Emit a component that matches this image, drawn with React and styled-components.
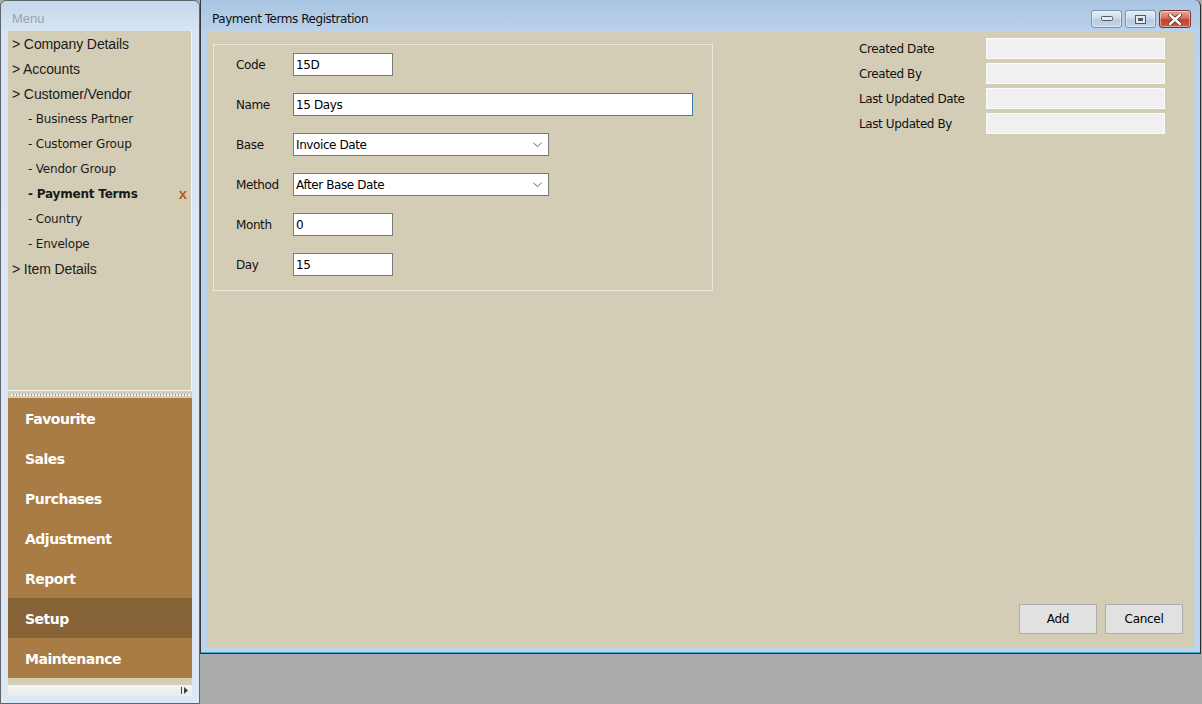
import React from "react";
import styled, { createGlobalStyle } from "styled-components";

const Global = createGlobalStyle`
  html, body { margin: 0; padding: 0; }
  body { width: 1202px; height: 704px; overflow: hidden; font-family: "Liberation Sans", Arial, sans-serif; }
  * { box-sizing: border-box; }
`;

const Screen = styled.div`
  display: flex;
  width: 1202px;
  height: 704px;
  background: #ababab;
`;

const MenuPanel = styled.aside`
  width: 200px;
  height: 704px;
  flex: none;
  display: flex;
  flex-direction: column;
  border: 1px solid #5f6468;
  border-radius: 6px 6px 0 0;
  background: linear-gradient(180deg, #c4d7ec 0px, #d8e6f3 30px, #dce8f4 100%);
  padding: 0 7px 7px 7px;
`;

const MenuTitle = styled.div`
  height: 30px;
  display: flex;
  align-items: center;
  padding: 4px 0 0 4px;
  color: #9aa4ae;
  font-size: 13px;
`;

const Tree = styled.div`
  height: 359px;
  background: #d4cdb6;
  border-right: 1px solid #f4f4f4;
  display: flex;
  flex-direction: column;
`;

const TreeRow = styled.div`
  height: 25px;
  flex: none;
  display: flex;
  align-items: center;
  padding-left: ${(p) => (p.$sub ? 20 : 4)}px;
  padding-right: 4px;
  font-size: ${(p) => (p.$sub ? 12 : 14)}px;
  font-weight: ${(p) => (p.$active ? "bold" : "normal")};
  color: #1a1a1a;
  font-family: ${(p) => (p.$sub ? '"DejaVu Sans", Verdana, sans-serif' : '"Liberation Sans", Arial, sans-serif')};
  letter-spacing: ${(p) => (p.$sub ? "-0.2px" : "-0.1px")};
`;

const TreeLabel = styled.span`
  flex: 1;
`;

const CloseMark = styled.span`
  color: #b45f1c;
  font-weight: bold;
  font-size: 15px;
  font-family: "Liberation Sans", Arial, sans-serif;
`;

const Splitter = styled.div`
  height: 8px;
  background: #d4cdb6;
  border-top: 1px solid #f6f6f6;
  display: flex;
  align-items: flex-end;
  padding: 0 2px 2px 3px;
`;

const Dots = styled.div`
  height: 2px;
  width: 100%;
  background: repeating-linear-gradient(90deg, #f2f2f2 0 2px, #9e9a90 2px 3px);
`;

const NavButton = styled.div`
  height: 40px;
  flex: none;
  display: flex;
  align-items: center;
  padding: 2px 0 0 17px;
  background: ${(p) => (p.$active ? "#866437" : "#a87c44")};
  color: #ffffff;
  font-weight: bold;
  font-size: 14px;
  font-family: "DejaVu Sans", Verdana, sans-serif;
  letter-spacing: -0.5px;
`;

const NavTail = styled.div`
  height: 7px;
  background: #d4cdb6;
`;

const HScroll = styled.div`
  height: 11px;
  background: linear-gradient(180deg, #f4f4f4, #ececec);
  display: flex;
  justify-content: flex-end;
  align-items: center;
  padding-right: 2px;
`;

const Desktop = styled.main`
  flex: 1;
  height: 704px;
  background: #ababab;
`;

const ChildWindow = styled.section`
  width: 1001px;
  height: 654px;
  border: 1px solid #2c2c2c;
  border-left-color: #3a3a3a;
  border-top: none;
  border-radius: 0 6px 0 0;
  background: linear-gradient(180deg, #a9c4e2 0px, #bad2eb 30px, #bcd3eb 100%);
  display: flex;
  flex-direction: column;
  padding: 0 6px 5px 6px;
  box-shadow: inset 0 -1px 0 #48a6d4;
`;

const TitleBar = styled.div`
  height: 31px;
  display: flex;
  align-items: flex-start;
  padding: 0 3px 0 5px;
`;

const Title = styled.div`
  flex: 1;
  font-size: 12px;
  color: #101010;
  font-family: "DejaVu Sans", Verdana, sans-serif;
  letter-spacing: -0.45px;
  margin-top: 12px;
`;

const Controls = styled.div`
  display: flex;
  gap: 3px;
  margin-top: 10px;
`;

const CtrlButton = styled.div`
  width: ${(p) => (p.$close ? 32 : 31)}px;
  height: 18px;
  border: 1px solid ${(p) => (p.$close ? "#7c3430" : "#7d93ad")};
  border-radius: 3px;
  background: ${(p) =>
    p.$close
      ? "linear-gradient(180deg, #e8a99c 0%, #d36e5e 45%, #c2412d 55%, #c95c45 100%)"
      : "linear-gradient(180deg, #e3ecf6 0%, #cddcee 45%, #b6cbe3 55%, #c4d6ea 100%)"};
  display: flex;
  align-items: center;
  justify-content: center;
  box-shadow: inset 0 0 0 1px rgba(255, 255, 255, 0.45);
`;

const Client = styled.div`
  flex: 1;
  background: #d4cdb6;
  display: flex;
  flex-direction: column;
`;

const TopArea = styled.div`
  display: flex;
  justify-content: space-between;
  align-items: flex-start;
`;

const GroupBox = styled.fieldset`
  margin: 13px 0 0 6px;
  padding: 8px 0 0 22px;
  width: 500px;
  height: 247px;
  border: 1px solid #ebe7dc;
  display: flex;
  flex-direction: column;
  gap: 17px;
`;

const FieldRow = styled.div`
  display: flex;
  align-items: center;
  height: 23px;
`;

const FieldLabel = styled.label`
  width: 57px;
  font-size: 12px;
  color: #111;
  font-family: "DejaVu Sans", Verdana, sans-serif;
  letter-spacing: -0.4px;
`;

const TextBox = styled.div`
  width: ${(p) => p.$w}px;
  height: 23px;
  background: #fff;
  border: 1px solid ${(p) => (p.$focus ? "#3c7fb1" : "#7a7a7a")};
  display: flex;
  align-items: center;
  padding-left: 2px;
  font-size: 12px;
  color: #000;
  font-family: "DejaVu Sans", Verdana, sans-serif;
  letter-spacing: -0.4px;
`;

const SelectText = styled.span`
  flex: 1;
`;

const Chevron = styled.svg`
  margin-right: 6px;
`;

const InfoPanel = styled.div`
  margin: 7px 29px 0 0;
  display: flex;
  flex-direction: column;
  gap: 4px;
`;

const InfoRow = styled.div`
  display: flex;
  align-items: center;
  height: 21px;
`;

const InfoLabel = styled.div`
  width: 127px;
  font-size: 12px;
  color: #111;
  font-family: "DejaVu Sans", Verdana, sans-serif;
  letter-spacing: -0.4px;
`;

const InfoBox = styled.div`
  width: 179px;
  height: 21px;
  background: #f0f0f0;
  border: 1px solid #fbfbfb;
`;

const Footer = styled.div`
  margin-top: auto;
  display: flex;
  justify-content: flex-end;
  gap: 8px;
  padding: 0 11px 14px 0;
`;

const Button = styled.button`
  width: 78px;
  height: 30px;
  background: #e1e1e1;
  border: 1px solid #adadad;
  font-size: 12px;
  color: #000;
  font-family: "DejaVu Sans", Verdana, sans-serif;
  letter-spacing: -0.3px;
  padding: 0;
`;

const tree = [
  { t: "> Company Details" },
  { t: "> Accounts" },
  { t: "> Customer/Vendor" },
  { t: "- Business Partner", sub: true },
  { t: "- Customer Group", sub: true },
  { t: "- Vendor Group", sub: true },
  { t: "- Payment Terms", sub: true, active: true },
  { t: "- Country", sub: true },
  { t: "- Envelope", sub: true },
  { t: "> Item Details" },
];

const navs = ["Favourite", "Sales", "Purchases", "Adjustment", "Report", "Setup", "Maintenance"];

const ChevronIcon = () => (
  <Chevron width="9" height="6" viewBox="0 0 9 6">
    <path d="M0.5 0.8 L4.5 4.6 L8.5 0.8" fill="none" stroke="#606060" strokeWidth="1" />
  </Chevron>
);

export default function App() {
  return (
    <>
      <Global />
      <Screen>
        <MenuPanel>
          <MenuTitle>Menu</MenuTitle>
          <Tree>
            {tree.map((r) => (
              <TreeRow key={r.t} $sub={r.sub} $active={r.active}>
                <TreeLabel>{r.t}</TreeLabel>
                {r.active && <CloseMark>x</CloseMark>}
              </TreeRow>
            ))}
          </Tree>
          <Splitter>
            <Dots />
          </Splitter>
          {navs.map((n) => (
            <NavButton key={n} $active={n === "Setup"}>
              {n}
            </NavButton>
          ))}
          <NavTail />
          <HScroll>
            <svg width="10" height="9" viewBox="0 0 10 9">
              <rect x="1" y="1" width="1" height="7" fill="#404040" />
              <path d="M4 1 L8 4.5 L4 8 Z" fill="#404040" />
            </svg>
          </HScroll>
        </MenuPanel>
        <Desktop>
          <ChildWindow>
            <TitleBar>
              <Title>Payment Terms Registration</Title>
              <Controls>
                <CtrlButton>
                  <svg width="12" height="6" viewBox="0 0 12 6">
                    <rect x="0.5" y="0.5" width="11" height="4" rx="1" fill="#e6eaee" stroke="#4d5a68" />
                  </svg>
                </CtrlButton>
                <CtrlButton>
                  <svg width="11" height="9" viewBox="0 0 11 9">
                    <rect x="0.5" y="0.5" width="10" height="8" fill="#e6eaee" stroke="#4d5a68" />
                    <rect x="3" y="3" width="5" height="3" fill="#4d5a68" />
                  </svg>
                </CtrlButton>
                <CtrlButton $close>
                  <svg width="14" height="11" viewBox="0 0 14 11">
                    <path d="M2 1 L12 10 M12 1 L2 10" stroke="#5a2a26" strokeWidth="4" strokeLinecap="round" />
                    <path d="M2 1 L12 10 M12 1 L2 10" stroke="#ffffff" strokeWidth="2.4" strokeLinecap="round" />
                  </svg>
                </CtrlButton>
              </Controls>
            </TitleBar>
            <Client>
              <TopArea>
                <GroupBox>
                  <FieldRow>
                    <FieldLabel>Code</FieldLabel>
                    <TextBox $w={100}>15D</TextBox>
                  </FieldRow>
                  <FieldRow>
                    <FieldLabel>Name</FieldLabel>
                    <TextBox $w={400} $focus>15 Days</TextBox>
                  </FieldRow>
                  <FieldRow>
                    <FieldLabel>Base</FieldLabel>
                    <TextBox $w={256}>
                      <SelectText>Invoice Date</SelectText>
                      <ChevronIcon />
                    </TextBox>
                  </FieldRow>
                  <FieldRow>
                    <FieldLabel>Method</FieldLabel>
                    <TextBox $w={256}>
                      <SelectText>After Base Date</SelectText>
                      <ChevronIcon />
                    </TextBox>
                  </FieldRow>
                  <FieldRow>
                    <FieldLabel>Month</FieldLabel>
                    <TextBox $w={100}>0</TextBox>
                  </FieldRow>
                  <FieldRow>
                    <FieldLabel>Day</FieldLabel>
                    <TextBox $w={100}>15</TextBox>
                  </FieldRow>
                </GroupBox>
                <InfoPanel>
                  {["Created Date", "Created By", "Last Updated Date", "Last Updated By"].map((l) => (
                    <InfoRow key={l}>
                      <InfoLabel>{l}</InfoLabel>
                      <InfoBox />
                    </InfoRow>
                  ))}
                </InfoPanel>
              </TopArea>
              <Footer>
                <Button>Add</Button>
                <Button>Cancel</Button>
              </Footer>
            </Client>
          </ChildWindow>
        </Desktop>
      </Screen>
    </>
  );
}
